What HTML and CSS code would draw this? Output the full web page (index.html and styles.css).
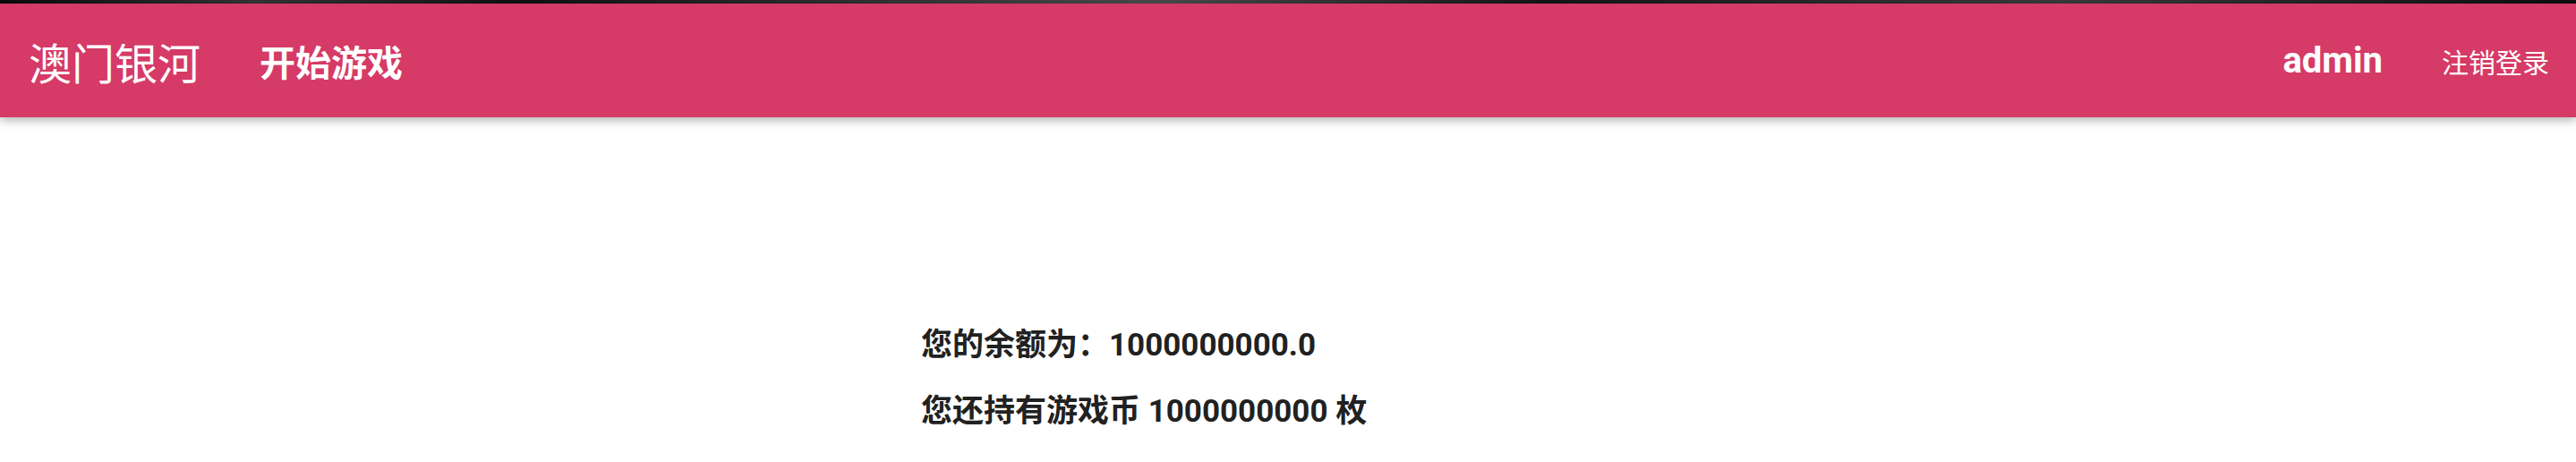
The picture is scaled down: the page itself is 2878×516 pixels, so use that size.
FILE: index.html
```html
<!DOCTYPE html>
<html lang="zh-CN">
<head>
<meta charset="utf-8">
<title>澳门银河</title>
<link rel="stylesheet" href="styles.css">
</head>
<body>
<div class="topband"></div>
<header class="navbar">
  <div class="nav-left">
    <a class="brand" href="#">澳门银河</a>
    <a class="nav-link" href="#">开始游戏</a>
  </div>
  <div class="nav-right">
    <span class="user">admin</span>
    <a class="logout" href="#">注销登录</a>
  </div>
</header>
<main class="content">
  <div class="container">
    <p class="line">您的余额为：1000000000.0</p>
    <p class="line">您还持有游戏币 1000000000 枚</p>
  </div>
</main>
</body>
</html>
```
FILE: styles.css
```css
html, body {
  margin: 0;
  padding: 0;
  background: #ffffff;
}
body {
  font-family: Roboto, "Noto Sans CJK SC", sans-serif;
  overflow: hidden;
}
a {
  color: inherit;
  text-decoration: none;
}
.topband {
  height: 4px;
  background: linear-gradient(90deg, #0a0a0a 0%, #333 10%, #111 20%, #4a4a4a 45%, #151515 60%, #3a3a3a 80%, #0d0d0d 100%);
}
.navbar {
  position: relative;
  z-index: 1;
  height: 127px;
  background: #d63a66;
  color: #ffffff;
  display: flex;
  align-items: center;
  justify-content: space-between;
  padding: 0 30px 0 32px;
  box-shadow: 0 4px 10px rgba(0, 0, 0, 0.28);
}
.nav-left, .nav-right {
  display: flex;
  align-items: center;
}
.brand {
  font-size: 48px;
  font-weight: 400;
}
.nav-link {
  font-size: 40px;
  font-weight: 700;
  margin-left: 66px;
}
.user {
  font-size: 40px;
  font-weight: 700;
}
.logout {
  font-size: 30px;
  font-weight: 400;
  margin-left: 66px;
}
.content {
  padding-top: 233px;
}
.container {
  width: 820px;
  margin: 0 auto;
  color: #212121;
}
.line {
  margin: 0 0 31px;
  font-size: 35px;
  font-weight: 700;
  line-height: 43px;
}
```
